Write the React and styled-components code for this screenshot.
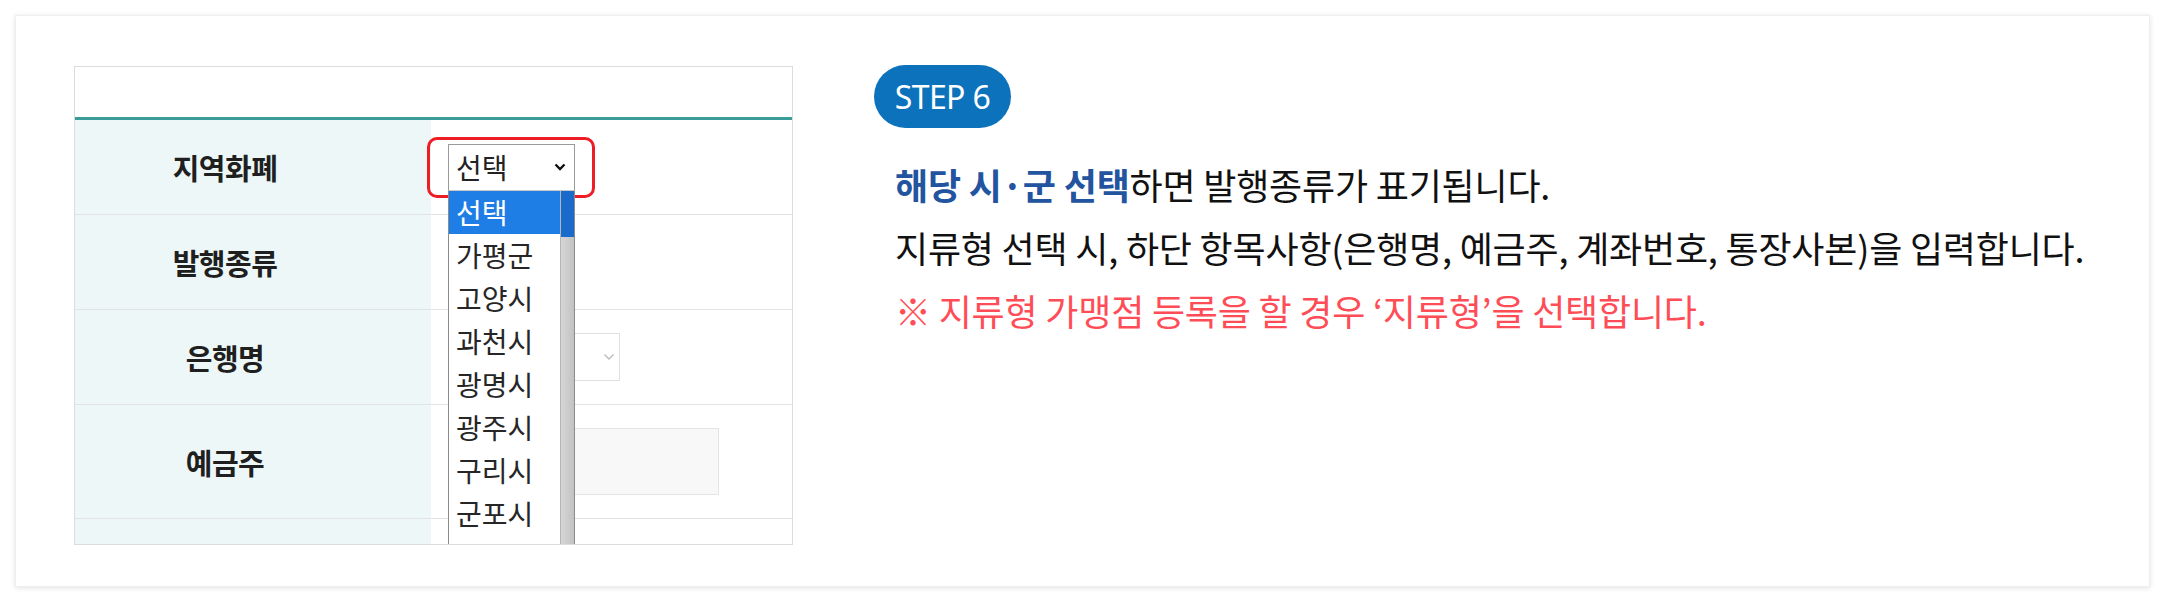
import React from "react";
import styled, { createGlobalStyle } from "styled-components";

const GlobalStyle = createGlobalStyle`
  html, body {
    margin: 0;
    padding: 0;
    background: #fff;
  }
  body {
    font-family: "Noto Sans CJK KR", "Noto Sans", sans-serif;
  }
`;

const options = ["선택", "가평군", "고양시", "과천시", "광명시", "광주시", "구리시", "군포시", "김포시"];

function Chevron({ color = "#111", width = 2.4 }) {
  return (
    <svg width="12" height="8" viewBox="0 0 12 8">
      <polyline points="1.5,1.5 6,6 10.5,1.5" fill="none" stroke={color} strokeWidth={width} />
    </svg>
  );
}

function App() {
  return (
    <>
      <GlobalStyle />
      <Card>
        <Shot>
          <ShotHeader />
          <Row $h={95}>
            <Label>지역화폐</Label>
            <Value>
              <SelectWrap>
                <Select>
                  <span>선택</span>
                  <Chevron />
                </Select>
                <Highlight />
                <OptionList>
                  {options.map((o, i) => (
                    <Option key={o} $active={i === 0}>
                      {o}
                    </Option>
                  ))}
                  <Scrollbar />
                </OptionList>
              </SelectWrap>
            </Value>
          </Row>
          <Row $h={95}>
            <Label>발행종류</Label>
            <Value />
          </Row>
          <Row $h={95}>
            <Label>은행명</Label>
            <Value>
              <BankSelect>
                <Chevron color="#bbb" width={1.4} />
              </BankSelect>
            </Value>
          </Row>
          <Row $h={114}>
            <Label>예금주</Label>
            <Value>
              <Input />
            </Value>
          </Row>
          <Row $h={40} $last>
            <Label />
            <Value />
          </Row>
        </Shot>

        <Guide>
          <StepBadge>STEP 6</StepBadge>
          <Lines>
            <Line>
              <Strong>해당 시·군 선택</Strong>하면 발행종류가 표기됩니다.
            </Line>
            <Line>지류형 선택 시, 하단 항목사항(은행명, 예금주, 계좌번호, 통장사본)을 입력합니다.</Line>
            <Line $note>※ 지류형 가맹점 등록을 할 경우 ‘지류형’을 선택합니다.</Line>
          </Lines>
        </Guide>
      </Card>
    </>
  );
}

export default App;

const Card = styled.div`
  margin: 15px 16px 14px 15px;
  height: 572px;
  box-sizing: border-box;
  padding: 50px 0 0 58px;
  display: flex;
  gap: 81px;
  background: #fff;
  border: 1px solid #efefef;
  box-shadow: 0 1px 5px rgba(0, 0, 0, 0.12);
`;

const Shot = styled.div`
  width: 719px;
  height: 479px;
  flex-shrink: 0;
  box-sizing: border-box;
  border: 1px solid #dcdcdc;
  overflow: hidden;
  display: flex;
  flex-direction: column;
`;

const ShotHeader = styled.div`
  height: 50px;
  flex-shrink: 0;
  border-bottom: 3px solid #3a9c97;
`;

const Row = styled.div`
  display: grid;
  grid-template-columns: 356px 1fr;
  height: ${(p) => p.$h}px;
  flex-shrink: 0;
  box-sizing: border-box;
  border-bottom: ${(p) => (p.$last ? "none" : "1px solid #e2e4e4")};
`;

const Label = styled.div`
  background: #edf7f7;
  display: flex;
  align-items: center;
  justify-content: center;
  padding-right: 56px;
  font-family: "Noto Sans CJK KR", sans-serif;
  font-weight: 700;
  font-size: 29px;
  letter-spacing: -0.5px;
  color: #1f1f1f;
`;

const Value = styled.div`
  position: relative;
  display: flex;
  align-items: center;
  padding-left: 17px;
`;

const SelectWrap = styled.div`
  position: relative;
  z-index: 5;
`;

const Select = styled.div`
  width: 127px;
  height: 47px;
  box-sizing: border-box;
  border: 1px solid #9a9a9a;
  border-bottom-color: #c8c8c8;
  background: #fff;
  display: flex;
  align-items: center;
  justify-content: space-between;
  padding: 0 8px 0 7px;
  font-size: 28px;
  color: #222;
`;

const Highlight = styled.div`
  position: absolute;
  left: -21px;
  top: -7px;
  width: 168px;
  height: 61px;
  box-sizing: border-box;
  border: 3px solid #ee1c25;
  border-radius: 10px;
  pointer-events: none;
`;

const OptionList = styled.ul`
  position: absolute;
  top: 100%;
  left: 0;
  width: 127px;
  height: 400px;
  margin: 0;
  padding: 0;
  list-style: none;
  box-sizing: border-box;
  border: 1px solid #8c8c8c;
  border-top: none;
  background: #fff;
  overflow: hidden;
`;

const Option = styled.li`
  height: 43px;
  line-height: 43px;
  padding-left: 7px;
  font-size: 28px;
  color: ${(p) => (p.$active ? "#fff" : "#262626")};
  background: ${(p) => (p.$active ? "#1e7ee6" : "transparent")};
`;

const Scrollbar = styled.div`
  position: absolute;
  top: 0;
  right: 0;
  width: 13px;
  height: 100%;
  background: linear-gradient(90deg, #d6d6d6, #c2c2c2);
  border-left: 1px solid #b5b5b5;
  &::before {
    content: "";
    display: block;
    height: 46px;
    background: #1a6acb;
  }
`;

const BankSelect = styled.div`
  width: 172px;
  height: 48px;
  box-sizing: border-box;
  border: 1px solid #e0e0e0;
  display: flex;
  align-items: center;
  justify-content: flex-end;
  padding-right: 4px;
`;

const Input = styled.div`
  width: 271px;
  height: 67px;
  box-sizing: border-box;
  border: 1px solid #e4e4e4;
  background: #f8f8f8;
`;

const Guide = styled.div`
  display: flex;
  flex-direction: column;
  align-items: flex-start;
  margin-top: -1px;
`;

const StepBadge = styled.div`
  width: 137px;
  height: 63px;
  border-radius: 32px;
  background: #0c72bb;
  color: #fff;
  display: flex;
  align-items: center;
  justify-content: center;
  font-family: "Noto Sans", sans-serif;
  font-size: 32px;
  letter-spacing: -0.6px;
`;

const Lines = styled.div`
  margin-top: 25px;
  padding-left: 21px;
`;

const Line = styled.p`
  margin: 0;
  line-height: 63px;
  font-family: "Noto Sans CJK KR", sans-serif;
  font-size: 36px;
  letter-spacing: -0.2px;
  white-space: nowrap;
  color: ${(p) => (p.$note ? "#ff4d57" : "#111")};
`;

const Strong = styled.strong`
  font-weight: 700;
  color: #2254a0;
`;
